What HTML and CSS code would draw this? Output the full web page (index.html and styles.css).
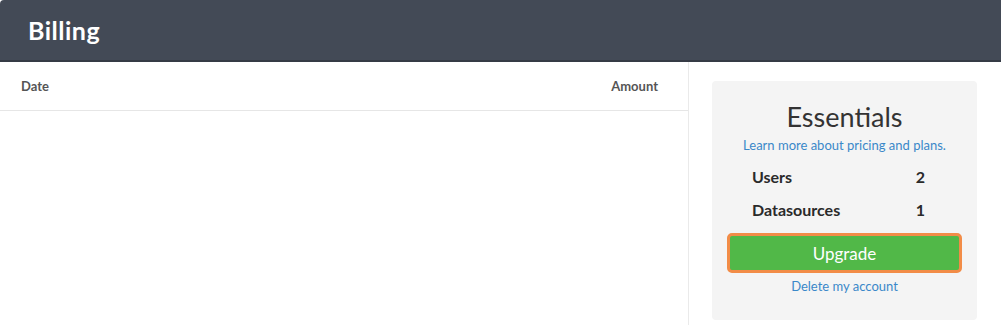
FILE: index.html
```html
<!DOCTYPE html>
<html>
<head>
<meta charset="utf-8">
<link rel="stylesheet" href="styles.css">
</head>
<body>
<header class="topbar"><h1 class="title">Billing</h1></header>
<main class="content">
  <section class="invoices">
    <div class="table-head">
      <span class="col">Date</span>
      <span class="col">Amount</span>
    </div>
  </section>
  <aside class="side">
    <div class="plan-card">
      <h2 class="plan-name">Essentials</h2>
      <a class="link plan-link" href="#">Learn more about pricing and plans.</a>
      <div class="stats">
        <div class="stat"><span>Users</span><span class="val">2</span></div>
        <div class="stat"><span>Datasources</span><span class="val">1</span></div>
      </div>
      <button class="upgrade">Upgrade</button>
      <a class="link delete" href="#">Delete my account</a>
    </div>
  </aside>
</main>
</body>
</html>
```
FILE: styles.css
```css
html, body { margin: 0; padding: 0; background: #fff; }
body { font-family: "Lato", "Open Sans", sans-serif; color: #333; overflow: hidden; }
.topbar {
  height: 60px;
  background: #434a56;
  border-bottom: 2px solid #353b45;
  display: flex;
  align-items: center;
  padding-left: 28px;
  border-top-left-radius: 4px;
}
.title { margin: 0; color: #fff; font-size: 25px; font-weight: 700; letter-spacing: 0.5px; }
.content { display: flex; height: 263px; }
.invoices { width: 688px; border-right: 1px solid #eaeaea; }
.table-head {
  height: 48px;
  border-bottom: 1px solid #e6e6e6;
  display: flex;
  justify-content: space-between;
  align-items: center;
  padding: 0 30px 0 21px;
}
.col { font-size: 13px; font-weight: 700; color: #555; }
.side { padding: 19px 0 0 23px; }
.plan-card {
  width: 265px;
  height: 239px;
  box-sizing: border-box;
  background: #f4f4f4;
  border-radius: 4px;
  padding: 20px 15px 0;
  display: flex;
  flex-direction: column;
  align-items: center;
}
.plan-name { margin: 0; font-size: 27px; font-weight: 400; color: #333; line-height: 32px; }
.link { color: #3a88c9; text-decoration: none; font-size: 13px; }
.plan-link { margin-top: 4px; }
.stats { width: 100%; box-sizing: border-box; padding: 7px 37px 0 25px; }
.stat { display: flex; justify-content: space-between; font-size: 16px; font-weight: 700; color: #2a2a2a; height: 33px; align-items: center; }
.upgrade {
  margin-top: 7px;
  width: 235px;
  height: 40px;
  background: #51b848;
  border: 3px solid #f28c47;
  border-radius: 5px;
  color: #fff;
  font-family: inherit;
  font-size: 17px;
  cursor: pointer;
}
.delete { margin-top: 5px; }
```
